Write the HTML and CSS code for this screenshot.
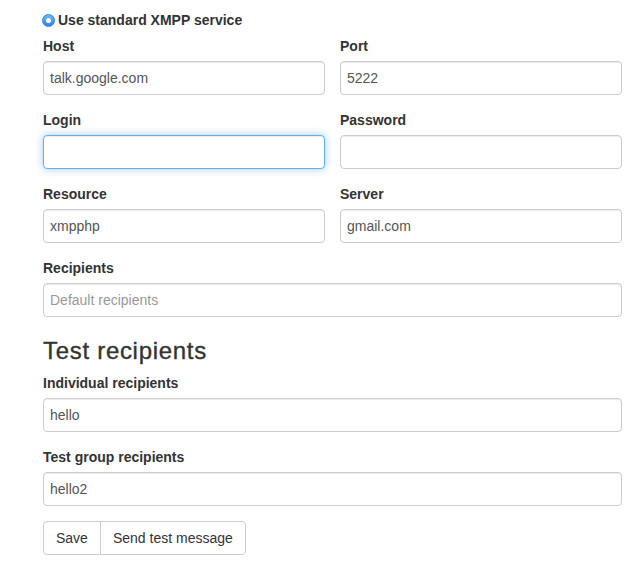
FILE: index.html
```html
<!DOCTYPE html>
<html>
<head>
<meta charset="utf-8">
<link rel="stylesheet" href="styles.css">
</head>
<body>
<form class="page">
  <label class="radio">
    <span class="radio-dot"></span>
    <span>Use standard XMPP service</span>
  </label>
  <div class="grid">
    <div class="group">
      <label class="lbl">Host</label>
      <input class="field" type="text" value="talk.google.com">
    </div>
    <div class="group">
      <label class="lbl">Port</label>
      <input class="field" type="text" value="5222">
    </div>
    <div class="group">
      <label class="lbl">Login</label>
      <input class="field focus" type="text" value="">
    </div>
    <div class="group">
      <label class="lbl">Password</label>
      <input class="field" type="password" value="">
    </div>
    <div class="group">
      <label class="lbl">Resource</label>
      <input class="field" type="text" value="xmpphp">
    </div>
    <div class="group">
      <label class="lbl">Server</label>
      <input class="field" type="text" value="gmail.com">
    </div>
  </div>
  <div class="group">
    <label class="lbl">Recipients</label>
    <input class="field" type="text" placeholder="Default recipients">
  </div>
  <h3 class="heading">Test recipients</h3>
  <div class="group">
    <label class="lbl">Individual recipients</label>
    <input class="field" type="text" value="hello">
  </div>
  <div class="group">
    <label class="lbl">Test group recipients</label>
    <input class="field" type="text" value="hello2">
  </div>
  <div class="btn-group">
    <button type="button" class="btn">Save</button>
    <button type="button" class="btn">Send test message</button>
  </div>
</form>
</body>
</html>
```
FILE: styles.css
```css
* { box-sizing: border-box; }
html, body { margin: 0; padding: 0; background: #fff; }
body {
  font-family: "Liberation Sans", Arial, Helvetica, sans-serif;
  font-size: 14px;
  line-height: 20px;
  color: #333;
}
.page {
  width: 622px;
  padding: 10px 0 0 43px;
  display: flex;
  flex-direction: column;
}
.radio {
  display: flex;
  align-items: center;
  gap: 3px;
  margin-left: -1px;
  font-weight: bold;
  height: 20px;
  margin-bottom: 6px;
}
.radio-dot {
  width: 13px;
  height: 13px;
  border-radius: 50%;
  background: linear-gradient(#6cb3fa, #2a87f2);
  border: 1px solid #2d7fe0;
  display: flex;
  align-items: center;
  justify-content: center;
}
.radio-dot::after {
  content: "";
  width: 5px;
  height: 5px;
  border-radius: 50%;
  background: #fff;
}
.grid {
  display: grid;
  grid-template-columns: 282px 282px;
  column-gap: 15px;
}
.group {
  display: flex;
  flex-direction: column;
  margin-bottom: 15px;
}
.lbl {
  font-weight: bold;
  height: 20px;
  margin-bottom: 5px;
}
.field {
  height: 34px;
  width: 100%;
  padding: 6px 6px;
  font-family: inherit;
  font-size: 14px;
  color: #555;
  background: #fff;
  border: 1px solid #ccc;
  border-radius: 4px;
  box-shadow: inset 0 1px 1px rgba(0,0,0,.075);
  outline: none;
}
.field::placeholder { color: #999; }
.field.focus {
  border-color: #66afe9;
  box-shadow: inset 0 1px 1px rgba(0,0,0,.075), 0 0 8px rgba(102,175,233,.6);
}
.heading {
  font-size: 24px;
  font-weight: 500;
  line-height: 26px;
  letter-spacing: 0.7px;
  -webkit-text-stroke: 0.35px #333;
  margin: 6px 0 9px;
  color: #333;
}
.btn-group {
  display: flex;
}
.btn {
  height: 34px;
  padding: 6px 12px;
  font-family: inherit;
  font-size: 14px;
  color: #333;
  background: #fff;
  border: 1px solid #ccc;
  border-radius: 0;
}
.btn:first-child { border-radius: 4px 0 0 4px; }
.btn:last-child { border-radius: 0 4px 4px 0; margin-left: -1px; }
```
